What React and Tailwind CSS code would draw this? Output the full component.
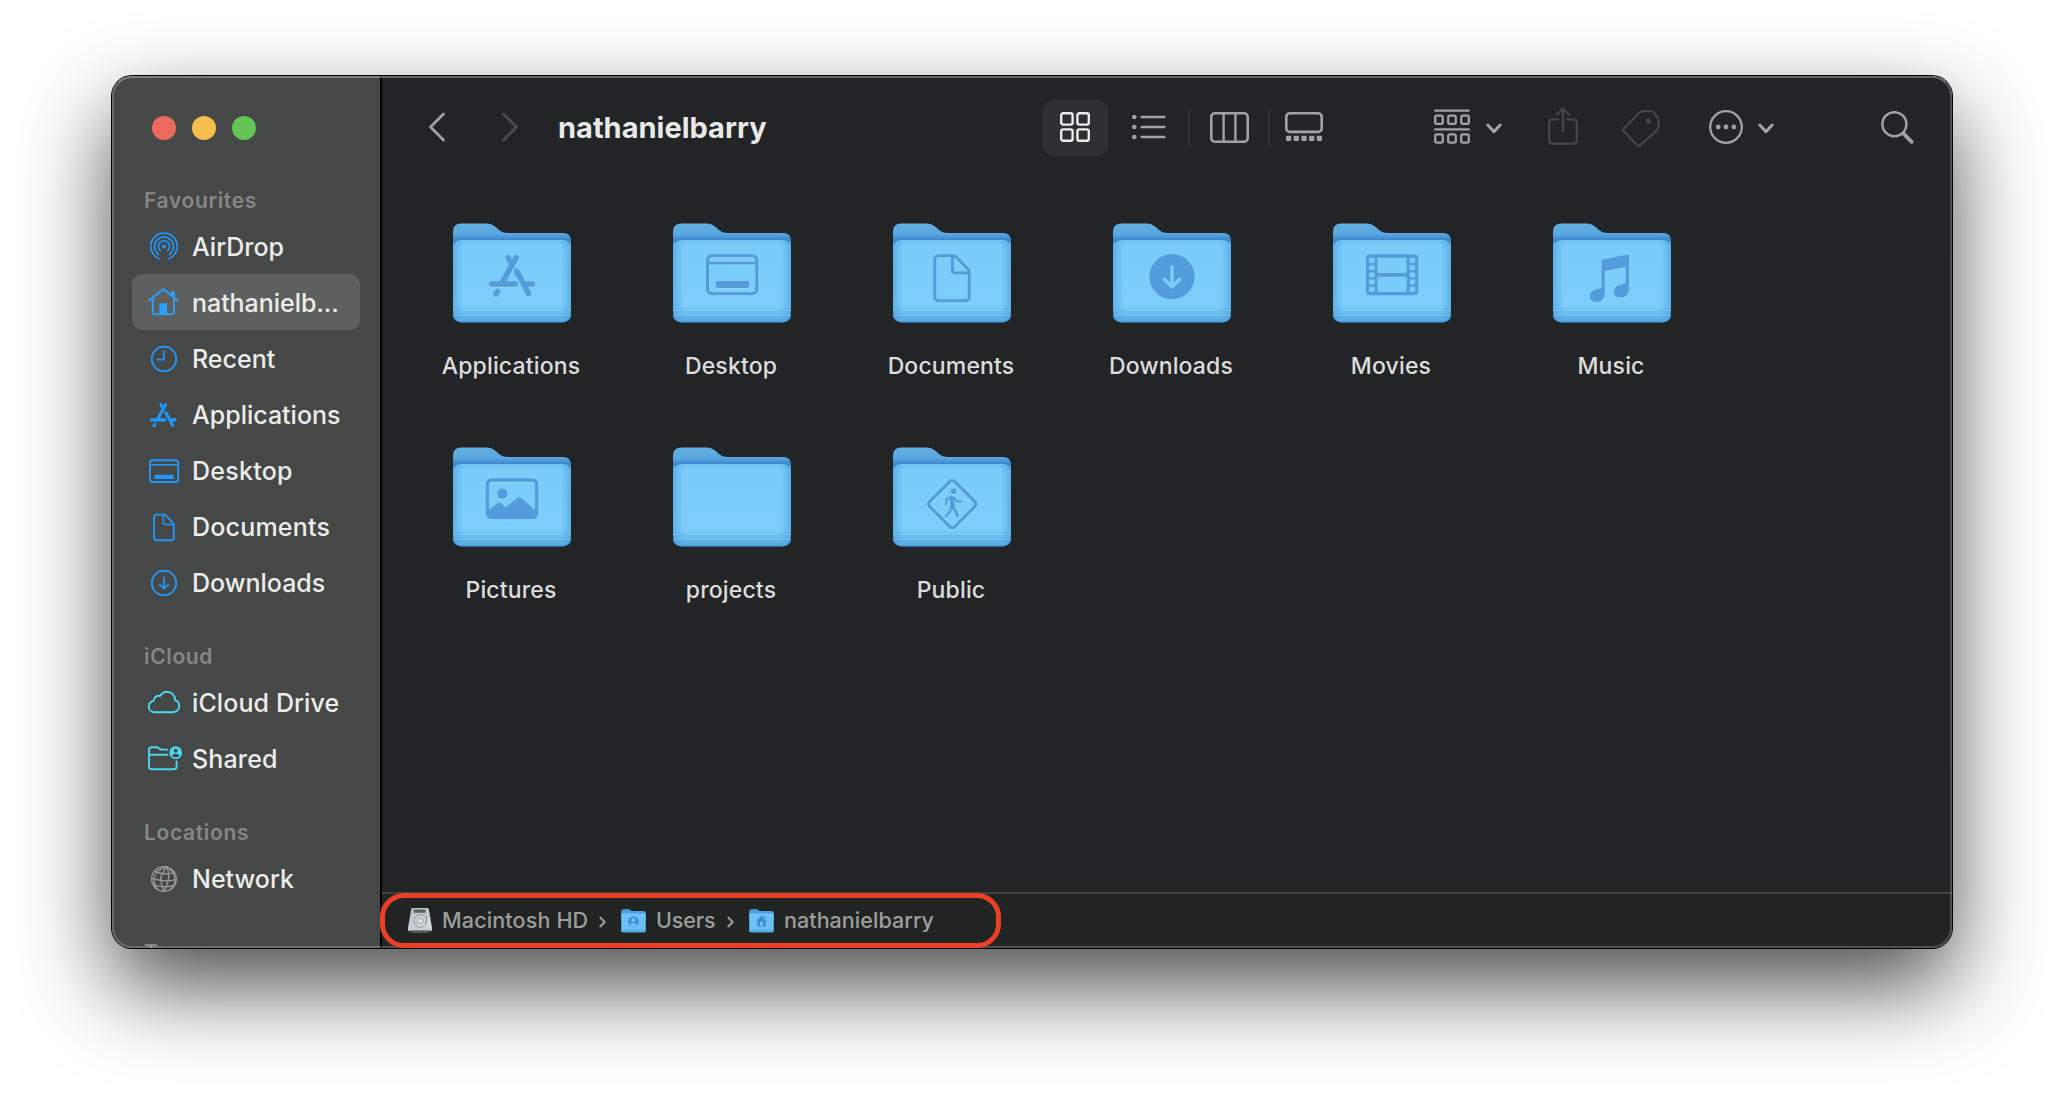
import React from "react";

const AppStoreMark = ({ width = 5.6 }) => (
  <g fill="none" stroke="currentColor" strokeWidth={width} strokeLinecap="round">
    <path d="M63.2 34.6 48.8 60.4" />
    <path d="M55 34.6 58 39.6" />
    <path d="M64.2 49 75.6 70.6" />
    <path d="M38.6 61H62" />
    <path d="M72.6 61H79.4" />
    <path d="M44.6 68.6 43 71" />
    <path d="M62.9 46.5v5" strokeWidth={width / 2} />
  </g>
);

/* Glyphs stamped on the folder fronts, in the folder's own 118 x 100 space */
const folderGlyphs = {
  applications: <AppStoreMark />,
  desktop: (
    <g>
      <rect x="34.5" y="32.8" width="49.2" height="38" rx="4.5" fill="none" stroke="currentColor" strokeWidth="3" />
      <path d="M35 40.3H83" stroke="currentColor" strokeWidth="2.4" />
      <rect x="42.7" y="58" width="33.3" height="7" rx="1.6" fill="currentColor" />
    </g>
  ),
  documents: (
    <g fill="none" stroke="currentColor" strokeWidth="3" strokeLinejoin="round">
      <path d="M60.5 32.8H46Q41.7 32.8 41.7 37V73.4Q41.7 77.7 46 77.7H72Q76.2 77.7 76.2 73.4V49Q76.2 47.6 75.2 46.5L63 33.9Q62 32.8 60.5 32.8Z" />
      <path d="M59.5 33.5V47.5Q59.5 50 62 50H76" />
    </g>
  ),
  downloads: (
    <g>
      <circle cx="59" cy="53.7" r="22.6" fill="currentColor" />
      <path d="M59 43.6V63.4M51.3 56.2 59 63.8 66.7 56.2" fill="none" stroke="#7accfa" strokeWidth="3.4" strokeLinecap="round" strokeLinejoin="round" />
    </g>
  ),
  movies: (
    <g>
      <rect x="33" y="31.3" width="52.3" height="41" rx="4" fill="currentColor" />
      <g fill="#7accfa">
        {[35, 42.2, 49.4, 56.6, 63.8].map((y) => (
          <g key={y}>
            <rect x="36" y={y} width="5.7" height="4.9" rx="1.4" />
            <rect x="76.7" y={y} width="5.5" height="4.9" rx="1.4" />
          </g>
        ))}
        <rect x="44.4" y="34.8" width="29.2" height="15.2" rx="0.8" />
        <rect x="44.4" y="53.7" width="29.2" height="15.2" rx="0.8" />
      </g>
    </g>
  ),
  music: (
    <path
      d="M48.5 38.3Q48.5 36.9 49.9 36.6L74.2 31.8Q76 31.5 76 33.2V66.5C76 71.5 72.2 74.6 67.8 74.6C63.6 74.6 60.9 72 60.9 68.7C60.9 64.8 63.8 62.3 68 61.4L70.6 60.8Q72.7 60.3 72.7 58.4V44L51.8 48.1V70C51.8 75.9 48.1 79.2 43.9 79.2C39.8 79.2 37 76.8 37 73.4C37 69.6 40 67 44 66.1L46.7 65.5Q48.5 65 48.5 63Z"
      fill="currentColor"
    />
  ),
  pictures: (
    <g>
      <rect x="34.4" y="33" width="49.2" height="37.6" rx="4.5" fill="none" stroke="currentColor" strokeWidth="3.4" />
      <circle cx="49.3" cy="46.6" r="5.2" fill="currentColor" />
      <path d="M34 64.4 44.3 56.3Q46.5 54.8 48.4 56.4L52.6 60.4 63.8 51.2Q66.1 49.4 68.4 51.2L84 64.5V68Q84 72 80 72H38Q34 72 34 68Z" fill="currentColor" />
    </g>
  ),
  projects: null,
  public: (
    <g>
      <path d="M56.7 34.6Q59.2 32.3 61.7 34.6L81.8 54.6Q84 57.1 81.8 59.6L61.7 79.7Q59.2 82 56.7 79.7L36.6 59.6Q34.4 57.1 36.6 54.6Z" fill="none" stroke="currentColor" strokeWidth="3" />
      <circle cx="60.5" cy="44.3" r="2.8" fill="currentColor" />
      <path d="M58.8 51.6 59.5 60.5" fill="none" stroke="currentColor" strokeWidth="4.6" strokeLinecap="round" />
      <g fill="none" stroke="currentColor" strokeWidth="2.3" strokeLinecap="round" strokeLinejoin="round">
        <path d="M57.6 50.2 53.8 52 53 57" />
        <path d="M61 50.6 63.8 54.4 68.4 54.7" />
        <path d="M60 61 62.6 64 64.6 69.4" strokeWidth="2.6" />
        <path d="M57.6 62.6 56.4 65.4 52.8 69.4" />
      </g>
    </g>
  ),
};

const FolderDefs = () => (
  <svg width="0" height="0" className="absolute" aria-hidden="true">
    <defs>
      <linearGradient id="folderBack" x1="0" y1="0" x2="0" y2="1">
        <stop offset="0" stopColor="#62afe3" />
        <stop offset="0.17" stopColor="#5aa8e0" />
        <stop offset="0.23" stopColor="#4a98d8" />
        <stop offset="0.285" stopColor="#3a80c6" />
        <stop offset="0.33" stopColor="#4797d8" />
        <stop offset="1" stopColor="#4797d8" />
      </linearGradient>
      <linearGradient id="folderFront" x1="0" y1="0" x2="0" y2="1">
        <stop offset="0" stopColor="#72c2f3" />
        <stop offset="0.08" stopColor="#7accfa" />
        <stop offset="0.8" stopColor="#7dcefc" />
        <stop offset="0.88" stopColor="#6ec0f0" />
        <stop offset="1" stopColor="#55a8e0" />
      </linearGradient>
      <linearGradient id="folderSides" x1="0" y1="0" x2="1" y2="0">
        <stop offset="0" stopColor="#3f95d8" stopOpacity="0.5" />
        <stop offset="0.09" stopColor="#3f95d8" stopOpacity="0" />
        <stop offset="0.91" stopColor="#3f95d8" stopOpacity="0" />
        <stop offset="1" stopColor="#3f95d8" stopOpacity="0.5" />
      </linearGradient>
      <linearGradient id="driveTop" x1="0" y1="0" x2="1" y2="1">
        <stop offset="0" stopColor="#b4bcc0" />
        <stop offset="1" stopColor="#d9e0e4" />
      </linearGradient>
    </defs>
  </svg>
);

const Folder = ({ glyph, className }) => (
  <svg viewBox="0 0 118 102" className={className}>
    <rect x="1" y="90" width="116" height="10.6" rx="8" fill="#000" opacity="0.35" />
    <path d="M0 8.5Q0 0.4 8.5 0.4H34Q38.5 0.4 42 3.6L46 7Q49.5 10 54.5 10H110Q118 10 118 18V60H0Z" fill="url(#folderBack)" />
    <rect x="0" y="17" width="118" height="82.4" rx="8" fill="url(#folderFront)" />
    <rect x="0" y="17" width="118" height="82.4" rx="8" fill="url(#folderSides)" />
    <path d="M1 87.4H117M1 92.6H117" stroke="#8ad2fa" strokeOpacity="0.55" strokeWidth="0.9" />
    <path d="M1 88.6H117M1 94H117" stroke="#4a9fda" strokeOpacity="0.35" strokeWidth="0.9" />
    <path d="M0.5 89V91Q0.5 98.9 8.5 98.9H109.5Q117.5 98.9 117.5 91V89" fill="none" stroke="#3f90cf" strokeWidth="1" />
    <g className="text-[#8fd6fd]" transform="translate(0 1)">{glyph !== "downloads" && glyph !== "movies" && folderGlyphs[glyph]}</g>
    <g className="text-[#539cdb]">{folderGlyphs[glyph]}</g>
  </svg>
);

const sideIcons = {
  airdrop: (
    <g fill="none" strokeWidth="1.6" strokeLinecap="round">
      <path d="M-5 12.7A13.3 13.3 0 1 1 5 12.7" />
      <path d="M-5.4 8.3A9.5 9.5 0 1 1 5.4 8.3" />
      <path d="M-3.6 4.6A5.6 5.6 0 1 1 3.6 4.6" />
      <circle cx="0" cy="0.5" r="1.9" fill="currentColor" stroke="none" />
    </g>
  ),
  home: (
    <g>
      <path d="M-14.8-1.6-.6-12.8 13.6-1.6" strokeWidth="2.1" />
      <path d="M-11.2-3V9.8Q-11.2 12.2-8.8 12.2H7.6Q10 12.2 10 9.8V-3" strokeWidth="1.8" />
      <path d="M7.2-10.9H10.8V-3L7.2-6Z" fill="currentColor" stroke="none" />
      <path d="M-4.7 12.4V2.6Q-4.7 1.3-3.4 1.3H1.8Q3.1 1.3 3.1 2.6V12.4Z" fill="currentColor" stroke="none" />
    </g>
  ),
  recent: (
    <g strokeWidth="1.9">
      <circle cx="0" cy="1" r="12.2" />
      <path d="M-.2-6.6V1.6H-6.8" strokeWidth="1.7" />
    </g>
  ),
  applications: (
    <g transform="translate(-.7 1) scale(.576) translate(-59.2 -52.5)" stroke="none">
      <AppStoreMark width={5.4} />
    </g>
  ),
  desktop: (
    <g>
      <rect x="-14" y="-9.8" width="28.2" height="21.8" rx="2.6" strokeWidth="1.9" />
      <path d="M-14-5.3H14" strokeWidth="1.5" />
      <rect x="-9.6" y="4.7" width="19.4" height="4.4" rx="1" fill="currentColor" stroke="none" />
    </g>
  ),
  documents: (
    <g strokeWidth="1.9">
      <path d="M.4-11.4H-7.4Q-10-11.4-10-8.8V11.6Q-10 14.2-7.4 14.2H7.2Q9.8 14.2 9.8 11.6V-1Q9.8-1.8 9.2-2.5L1.8-10.7Q1.2-11.4.4-11.4Z" />
      <path d="M-.6-11V-3Q-.6-1.5.9-1.5H9.5" strokeWidth="1.6" />
    </g>
  ),
  downloads: (
    <g strokeWidth="1.9">
      <circle cx="0" cy="1" r="12.2" />
      <path d="M0-4.4V6.4M-4.6 2.4 0 6.8 4.6 2.4" strokeWidth="1.8" />
    </g>
  ),
  cloud: (
    <path
      d="M-9.4 10.2C-12.8 10.2-15.2 7.8-15.2 4.7C-15.2 1.9-13.3-.5-10.4-1.1C-10.5-4.3-7.3-7-3.9-5.9C-2.4-8.7.1-10.2 3-10.2C7.6-10.2 11.1-6.8 11.1-1.8C13.7-.9 15.2 1.4 15.2 4.1C15.2 7.5 12.7 10.2 9.2 10.2Z"
      strokeWidth="1.9"
    />
  ),
  shared: (
    <g>
      <path d="M3.6-8.4H-2.2Q-3.6-8.4-4.6-9.3L-5.4-10Q-6.4-10.7-7.6-10.7H-12.2Q-15-10.7-15-7.9V8.4Q-15 11.2-12.2 11.2H9.8Q12.6 11.2 12.6 8.4V3.4M-15-3.3H3.6" strokeWidth="1.9" />
      <circle cx="11.7" cy="-5.3" r="6.4" fill="currentColor" stroke="none" />
      <circle cx="11.7" cy="-7.2" r="2" fill="#464847" stroke="none" />
      <path d="M7.9-2.2Q9-4.2 11.7-4.2T15.5-2.2Q14-.4 11.7-.4T7.9-2.2Z" fill="#464847" stroke="none" />
    </g>
  ),
  network: (
    <g strokeWidth="1.4">
      <circle cx="0" cy="1" r="12.3" />
      <path d="M3-11Q-3.4-4-3.2 1.6T.2 13.2" />
      <path d="M3-11Q5.8-3 4 3.4T.2 13.2" />
      <path d="M2.6-11.2Q-9-8-9.6 0T-6.6 11.2" />
      <path d="M3-11Q10.6-6 11 .6T6.6 11.2" />
      <path d="M-9.4-6.6Q0-2.2 10-5.4" />
      <path d="M-12.3.4Q0 4.6 12.3 1.6" />
      <path d="M-10.4 7.4Q0 10 10 7.8" />
    </g>
  ),
};

const SideItem = ({ icon, label, active, tone = "text-[#2097ff]", tracking }) => (
  <div className={`mx-5 flex h-14 shrink-0 items-center gap-3 rounded-[10px] px-4 ${active ? "bg-[#5e605f]" : ""}`}>
    <svg viewBox="-16 -16 32 32" className={`size-8 shrink-0 overflow-visible ${tone}`} fill="none" stroke="currentColor" strokeLinecap="round" strokeLinejoin="round">
      {sideIcons[icon]}
    </svg>
    <span className={`mt-px whitespace-nowrap text-[25px] leading-[30px] text-[#ececeb] ${tracking ?? ""}`}>{label}</span>
  </div>
);

const SideHeading = ({ children }) => (
  <div className="h-16 shrink-0 pl-8 pt-[34px] text-[21px] font-semibold leading-[26px] tracking-[0.65px] text-[#858786]">{children}</div>
);

const Sidebar = () => (
  <aside className="flex w-[270px] shrink-0 flex-col overflow-hidden border-r-2 border-black bg-[#464847] font-medium">
    <div className="flex h-[78px] shrink-0 gap-4 pl-10 pt-10">
      <span className="size-6 rounded-full bg-[#ed6a5e]" />
      <span className="size-6 rounded-full bg-[#f5bf4f]" />
      <span className="size-6 rounded-full bg-[#61c554]" />
    </div>
    <SideHeading>Favourites</SideHeading>
    <SideItem icon="airdrop" label="AirDrop" />
    <SideItem icon="home" label="nathanielb..." active tone="text-[#2ba0ff]" tracking="tracking-[-0.05px]" />
    <SideItem icon="recent" label="Recent" />
    <SideItem icon="applications" label="Applications" />
    <SideItem icon="desktop" label="Desktop" tracking="tracking-[0.25px]" />
    <SideItem icon="documents" label="Documents" tracking="tracking-[0.2px]" />
    <SideItem icon="downloads" label="Downloads" />
    <SideHeading>iCloud</SideHeading>
    <SideItem icon="cloud" label="iCloud Drive" tone="text-[#49d9f2]" tracking="tracking-[0.1px]" />
    <SideItem icon="shared" label="Shared" tone="text-[#49d9f2]" tracking="tracking-[0.15px]" />
    <SideHeading>Locations</SideHeading>
    <SideItem icon="network" label="Network" tone="text-[#979998]" />
    <SideHeading>Tags</SideHeading>
  </aside>
);

const Svg = ({ w, h, className = "", children }) => (
  <svg width={w} height={h} viewBox={`0 0 ${w} ${h}`} className={`shrink-0 ${className}`} fill="none" stroke="currentColor" strokeLinecap="round" strokeLinejoin="round">
    {children}
  </svg>
);

const DownCaret = ({ className }) => (
  <Svg w={16} h={11} className={className}>
    <path d="M1.8 2 8 8.6 14.2 2" strokeWidth="3" />
  </Svg>
);

const Toolbar = () => (
  <header className="flex h-[102px] shrink-0 items-center text-[#a1a2a3]">
    <Svg w={18} h={30} className="ml-[46px]">
      <path d="M15.5 2 2.5 15 15.5 28" strokeWidth="2.8" />
    </Svg>
    <Svg w={18} h={30} className="ml-[55px] text-[#4a4b4d]">
      <path d="M2.5 2 15.5 15 2.5 28" strokeWidth="2.8" />
    </Svg>
    <h1 className="ml-[39px] mt-0.5 w-[484px] text-[29px] font-bold leading-9 text-[#e8e9e8]">nathanielbarry</h1>
    <div className="mt-0.5 flex h-14 w-[66px] shrink-0 items-center justify-center rounded-xl bg-[#2f3032] pb-0.5 text-[#ececec]">
      <Svg w={30} h={30}>
        <g strokeWidth="2.4">
          <rect x="1.2" y="1.2" width="11.4" height="11.4" rx="2" />
          <rect x="17.4" y="1.2" width="11.4" height="11.4" rx="2" />
          <rect x="1.2" y="17.4" width="11.4" height="11.4" rx="2" />
          <rect x="17.4" y="17.4" width="11.4" height="11.4" rx="2" />
        </g>
      </Svg>
    </div>
    <Svg w={34} h={26} className="ml-6">
      {[3, 13, 23].map((y) => (
        <g key={y}>
          <circle cx="2.3" cy={y} r="2.3" fill="currentColor" stroke="none" />
          <path d={`M9.6 ${y}H32.4`} strokeWidth="2.4" />
        </g>
      ))}
    </Svg>
    <span className="ml-[22px] mt-0.5 h-10 w-0.5 bg-[#303133]" />
    <Svg w={39} h={31} className="ml-5">
      <rect x="1.3" y="1.3" width="36.4" height="28.4" rx="3.4" strokeWidth="2.6" />
      <path d="M13.6 2V29M25.4 2V29" strokeWidth="2.4" />
    </Svg>
    <span className="ml-[19px] mt-0.5 h-10 w-0.5 bg-[#303133]" />
    <Svg w={38} h={30} className="ml-[15px]">
      <rect x="1.3" y="1.3" width="35.4" height="18.6" rx="3.4" strokeWidth="2.6" />
      {[1, 8.7, 16.4, 24.1, 31.8].map((x) => (
        <rect key={x} x={x} y="23.8" width="5.2" height="5.2" rx="0.8" fill="currentColor" stroke="none" />
      ))}
    </Svg>
    <Svg w={36} h={36} className="ml-[111px]">
      {[1.6, 20.4].map((y) => (
        <g key={y} strokeWidth="2.3">
          <path d={`M1.2 ${y}H34.8`} />
          <rect x="1.2" y={y + 5} width="7.6" height="8.2" rx="1.6" />
          <rect x="14.2" y={y + 5} width="7.6" height="8.2" rx="1.6" />
          <rect x="27.2" y={y + 5} width="7.6" height="8.2" rx="1.6" />
        </g>
      ))}
    </Svg>
    <DownCaret className="ml-4 mt-0.5" />
    <Svg w={30} h={38} className="-mt-[3px] ml-[46px] text-[#454648]">
      <path d="M10 12.4H4.4Q1.2 12.4 1.2 15.6V33.4Q1.2 36.6 4.4 36.6H25.6Q28.8 36.6 28.8 33.4V15.6Q28.8 12.4 25.6 12.4H20" strokeWidth="2.2" />
      <path d="M15 24V2.2M8.9 7.8 15 1.6 21.1 7.8" strokeWidth="2.2" />
    </Svg>
    <Svg w={38} h={38} className="ml-11 mt-px text-[#454648]">
      <path d="M20.6 2.2H28.4Q30.2 2.2 31.5 3.5L35.4 8.6Q36.6 10 36.6 11.8V17.4Q36.6 19.2 35.3 20.6L18.4 36.1Q16.6 37.7 14.9 36L2 22.6Q.5 21 2.1 19.4L17.6 3.5Q18.9 2.2 20.6 2.2Z" strokeWidth="2.2" />
      <circle cx="26.4" cy="12" r="2.6" fill="currentColor" stroke="none" />
    </Svg>
    <Svg w={34} h={34} className="ml-[49px]">
      <circle cx="17" cy="17" r="15.8" strokeWidth="2.3" />
      <g fill="currentColor" stroke="none">
        <circle cx="9.2" cy="17" r="2.4" />
        <circle cx="17" cy="17" r="2.4" />
        <circle cx="24.8" cy="17" r="2.4" />
      </g>
    </Svg>
    <DownCaret className="ml-[15px] mt-0.5" />
    <Svg w={33} h={33} className="ml-[107px]">
      <circle cx="13.4" cy="13.2" r="12" strokeWidth="2.5" />
      <path d="M22.4 22.4 30.6 30.8" strokeWidth="3.8" />
    </Svg>
  </header>
);

const folders = [
  ["applications", "Applications"],
  ["desktop", "Desktop"],
  ["documents", "Documents"],
  ["downloads", "Downloads"],
  ["movies", "Movies"],
  ["music", "Music"],
  ["pictures", "Pictures"],
  ["projects", "projects"],
  ["public", "Public"],
];

const CrumbArrow = () => (
  <Svg w={7} h={12} className="mt-0.5">
    <path d="M1.4 1.6 5.6 6 1.4 10.4" strokeWidth="2.1" />
  </Svg>
);

const MiniFolder = ({ children }) => (
  <svg width="25" height="24" viewBox="0 0 25 24" className="shrink-0">
    <path d="M.3 2Q.3.3 2 .3H8.2L10.6 2H23Q24.7 2 24.7 3.7V12H.3Z" fill="#4b9fdc" />
    <rect x=".3" y="4.2" width="24.4" height="19" rx="1.4" fill="#6cc2f7" />
    <rect x=".3" y="20.4" width="24.4" height="2.8" rx="1.2" fill="#58ade6" />
    {children}
  </svg>
);

const DriveIcon = () => (
  <svg width="24" height="26" viewBox="0 0 24 26" className="shrink-0">
    <path d="M3.2 1Q3.5 0 4.6 0H19.4Q20.5 0 20.8 1L24 20H0Z" fill="url(#driveTop)" />
    <rect x="0" y="19" width="24" height="4" rx="1" fill="#c9ced1" />
    <rect x="1" y="22.6" width="22" height="2.6" rx="1" fill="#3c3e3f" />
    <path d="M4 24H20" stroke="#8d9192" strokeWidth="1" strokeDasharray="1.6 1.4" />
    <rect x="5.6" y="1.4" width="12" height="3.4" rx=".6" fill="#5a6064" />
    <circle cx="12.4" cy="13" r="6.4" fill="none" stroke="#8e989e" strokeWidth=".9" />
    <circle cx="12.4" cy="13" r="2.6" fill="#e4e9ec" stroke="#8e989e" strokeWidth=".8" />
    <path d="M18 6Q20 10 17 16" fill="none" stroke="#8e989e" strokeWidth=".8" />
  </svg>
);

const PathBar = () => (
  <footer className="flex h-14 shrink-0 items-center border-t-2 border-[#414342] bg-[#222423] pl-[26px] pb-px text-[21.5px] font-medium leading-7 text-[#9c9e9d]">
    <DriveIcon />
    <span className="-mt-px ml-[10px] w-[157px] tracking-[0.15px]">Macintosh HD</span>
    <CrumbArrow />
    <span className="ml-[15px]">
      <MiniFolder>
        <circle cx="12.5" cy="12.8" r="5.4" fill="#3d8fd3" />
        <circle cx="12.5" cy="11" r="2.1" fill="#6cc2f7" />
        <path d="M8.8 16.2Q10 13.9 12.5 13.9T16.2 16.2Q14.8 17.8 12.5 17.8T8.8 16.2Z" fill="#6cc2f7" />
      </MiniFolder>
    </span>
    <span className="-mt-px ml-[10px] w-[71px] tracking-[-0.1px]">Users</span>
    <CrumbArrow />
    <span className="ml-[15px]">
      <MiniFolder>
        <path d="M12.5 6.8 18.4 12.4H16.8V17.8H8.2V12.4H6.6ZM15 7H16.6V9.5L15 8Z" fill="#3d8fd3" />
        <rect x="11" y="12.8" width="3" height="4" fill="#6cc2f7" />
      </MiniFolder>
    </span>
    <span className="-mt-px ml-[10px] tracking-[0.05px]">nathanielbarry</span>
  </footer>
);

export default function App() {
  return (
    <div className="h-[1096px] w-[2064px] overflow-hidden bg-white pl-28 pt-[76px] font-['Inter',sans-serif] antialiased">
      <FolderDefs />
      <div className="relative h-[872px] w-[1840px] rounded-[20px] shadow-[0_0_0_1px_#000,0_38px_88px_rgba(0,0,0,0.7)]">
        <div className="flex h-full overflow-hidden rounded-[20px] bg-[#232426]">
          <Sidebar />
          <main className="flex min-w-0 flex-1 flex-col">
            <Toolbar />
            <section className="grid flex-1 auto-rows-[224px] grid-cols-[repeat(6,220px)] content-start pl-5 pt-[45px]">
              {folders.map(([glyph, label]) => (
                <div key={glyph} className="flex flex-col items-center">
                  <Folder glyph={glyph} className="h-[102px] w-[118px]" />
                  <span className="mr-0.5 mt-[27px] text-[23px] font-medium leading-7 tracking-[0.15px] text-[#dcdddc]">{label}</span>
                </div>
              ))}
            </section>
            <PathBar />
          </main>
        </div>
        <div className="pointer-events-none absolute inset-0 rounded-[20px] border-2 border-white/20 border-t-white/30" />
        <div className="absolute bottom-0 left-[268px] h-[55px] w-[621px] rounded-[24px] border-[5px] border-[#ec4026]" />
      </div>
    </div>
  );
}
